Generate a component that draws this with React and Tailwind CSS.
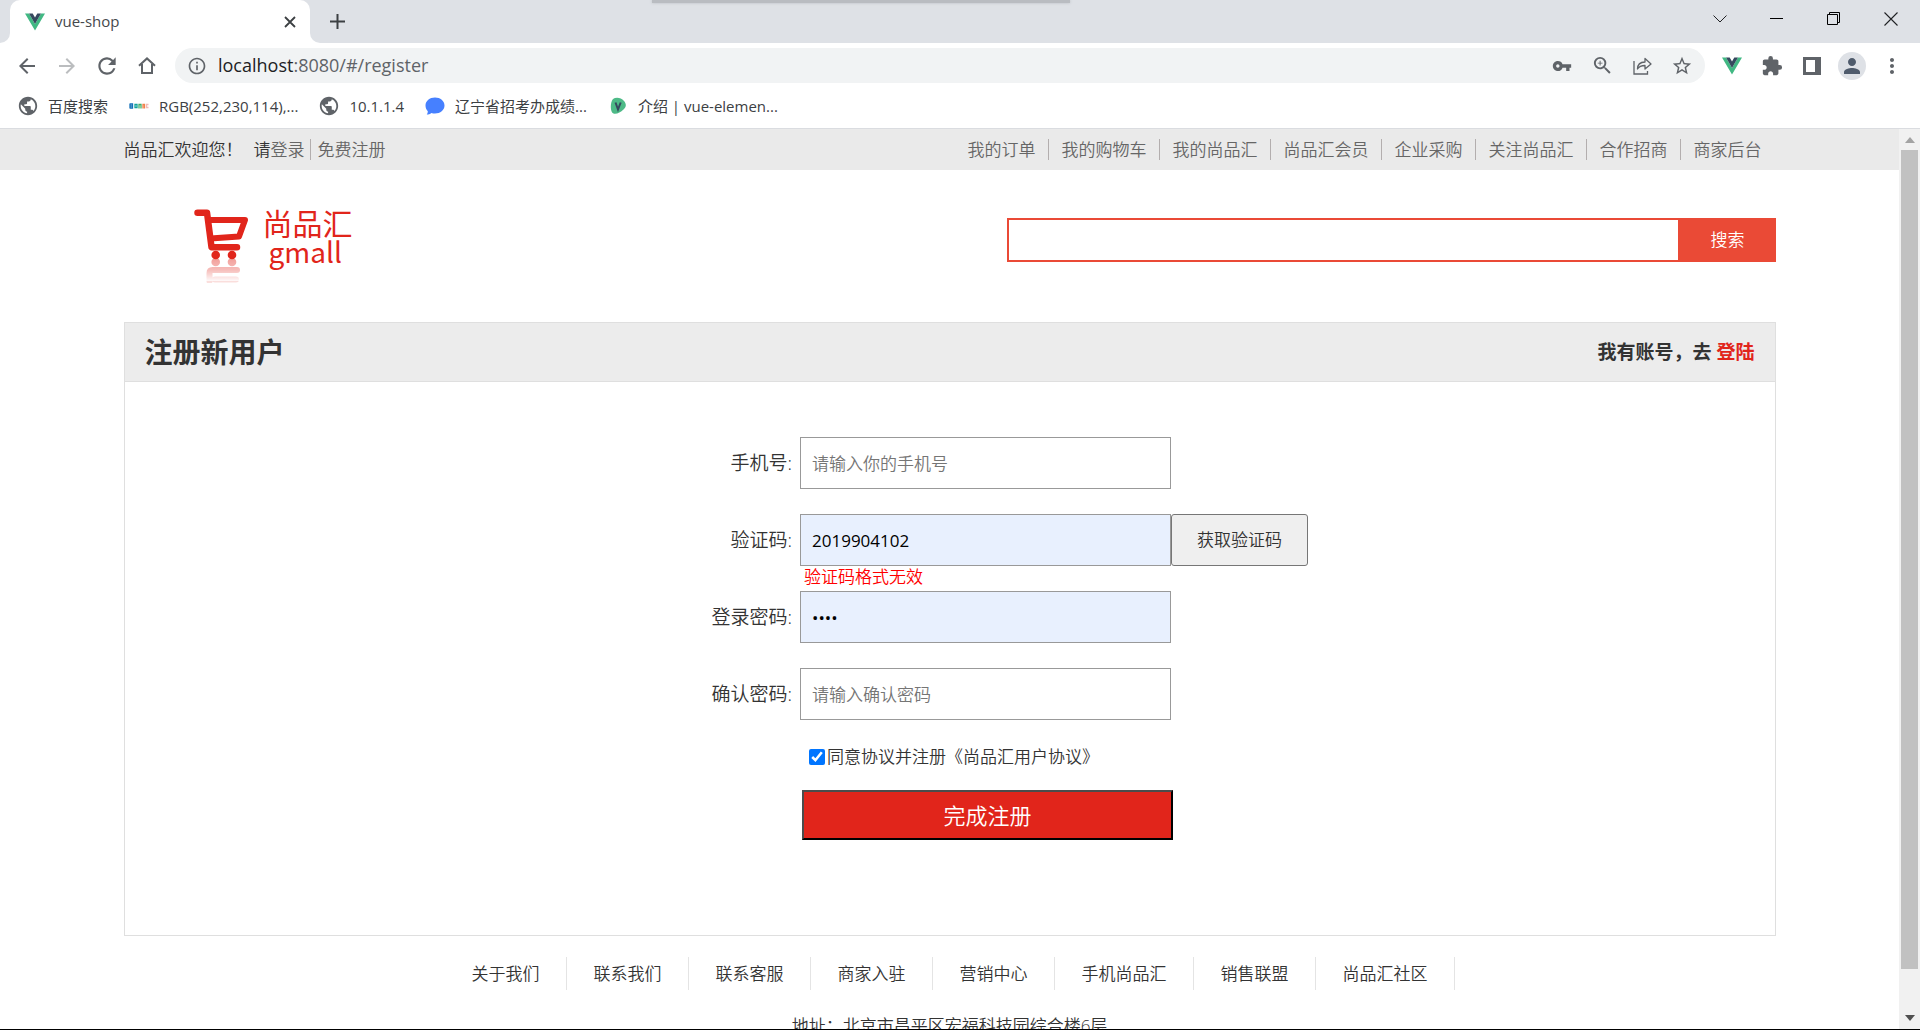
import { useState } from "react";
import {
  MdArrowBack,
  MdArrowForward,
  MdExtension,
  MdInfoOutline,
  MdMoreVert,
  MdPerson,
  MdPublic,
  MdRefresh,
  MdStarBorder,
  MdVpnKey,
  MdZoomIn,
} from "react-icons/md";

const topLinks = [
  "我的订单",
  "我的购物车",
  "我的尚品汇",
  "尚品汇会员",
  "企业采购",
  "关注尚品汇",
  "合作招商",
  "商家后台",
];

const footerLinks = [
  "关于我们",
  "联系我们",
  "联系客服",
  "商家入驻",
  "营销中心",
  "手机尚品汇",
  "销售联盟",
  "尚品汇社区",
];

function VueLogo() {
  return (
    <svg viewBox="0 0 20 18" className="h-[18px] w-5 shrink-0" aria-hidden="true">
      <path d="M0 0.5h4L10 11 16 0.5h4L10 17.5z" fill="#41b883" />
      <path d="M4 0.5h3.7L10 4.6 12.3 0.5H16L10 11z" fill="#35495e" />
    </svg>
  );
}

function TabStrip() {
  return (
    <div className="relative flex h-[43px] items-stretch overflow-hidden bg-[#dee1e6] text-[#202124]">
      <div className="absolute left-[652px] top-0 h-[3px] w-[418px] bg-[#b9bcc1] shadow-[0_0_3px_#b9bcc1]" />
      <div className="flex w-[10px] items-end bg-white">
        <div className="h-full w-full rounded-br-[10px] bg-[#dee1e6]" />
      </div>
      <div className="flex w-[300px] bg-[#dee1e6]">
        <div className="flex w-full items-center rounded-t-[10px] bg-white pl-[15px] pr-2">
          <VueLogo />
          <span className="ml-[10px] flex-1 text-[15px] text-[#45484c]">vue-shop</span>
          <button type="button" aria-label="关闭标签页" className="flex size-6 items-center justify-center">
            <svg viewBox="0 0 12 12" className="size-3" stroke="#3c4043" strokeWidth="1.8">
              <path d="M1 1l10 10M11 1L1 11" />
            </svg>
          </button>
        </div>
      </div>
      <div className="flex w-[10px] items-end bg-white">
        <div className="h-full w-full rounded-bl-[10px] bg-[#dee1e6]" />
      </div>
      <button type="button" aria-label="新标签页" className="flex w-[34px] items-center justify-center">
        <svg viewBox="0 0 15 15" className="size-[15px]" stroke="#3c4043" strokeWidth="2">
          <path d="M7.500 0v15M0 7.500h15" />
        </svg>
      </button>
      <div className="ml-auto flex h-[37px]">
        <button type="button" aria-label="搜索标签页" className="flex w-14 items-center justify-center">
          <svg viewBox="0 0 14 8" className="h-2 w-[14px]" fill="none" stroke="#202124">
            <path d="M0.500 0.500L7 7l6.500-6.500" />
          </svg>
        </button>
        <button type="button" aria-label="最小化" className="flex w-[57px] items-center justify-center">
          <svg viewBox="0 0 13 1" className="h-px w-[13px]">
            <rect width="13" height="1" />
          </svg>
        </button>
        <button type="button" aria-label="还原" className="flex w-[57px] items-center justify-center">
          <svg viewBox="0 0 13 13" className="size-[13px]" fill="none" stroke="#000">
            <path d="M0.500 2.500h10v10h-10zM2.500 2.500v-2h10v10h-2" />
          </svg>
        </button>
        <button type="button" aria-label="关闭" className="flex w-[58px] items-center justify-center">
          <svg viewBox="0 0 14 14" className="size-[14px]" stroke="#202124" strokeWidth="1.100">
            <path d="M0.500 0.500l13 13M13.500 0.500l-13 13" />
          </svg>
        </button>
      </div>
    </div>
  );
}

function IconButton({ label, children }) {
  return (
    <button type="button" aria-label={label} className="flex h-9 w-10 shrink-0 items-center justify-center">
      {children}
    </button>
  );
}

function Toolbar() {
  return (
    <div className="flex h-[45px] items-center bg-white pl-[7px] pr-2 text-[#5f6368]">
      <IconButton label="后退">
        <MdArrowBack size={24} />
      </IconButton>
      <IconButton label="前进">
        <MdArrowForward size={24} className="text-[#bbbdbf]" />
      </IconButton>
      <IconButton label="重新加载">
        <MdRefresh size={26} />
      </IconButton>
      <IconButton label="主页">
        <svg viewBox="0 0 18 17" className="h-[17px] w-[18px]" fill="none" stroke="currentColor" strokeWidth="2">
          <path d="M1 8.700L9 1.400l8 7.300M4 7v9h10V7" />
        </svg>
      </IconButton>

      {/* Address bar */}
      <div className="ml-2 flex h-[35px] flex-1 items-center rounded-full bg-[#f1f3f4] pl-3 pr-[3px]">
        <MdInfoOutline size={20} />
        <div className="ml-[11px] flex-1 pb-[2px] text-lg leading-6">
          <span className="text-[#202124]">localhost</span>:8080/#/register
        </div>
        <IconButton label="密码">
          <MdVpnKey size={20} />
        </IconButton>
        <IconButton label="缩放">
          <MdZoomIn size={23} />
        </IconButton>
        <IconButton label="分享">
          <svg viewBox="0 0 19 18" className="h-[18px] w-[19px]" fill="none" stroke="currentColor" strokeWidth="1.300">
            <path d="M1 4v13h13.500v-3" />
            <path d="M4.500 12c0-5 3-6.800 7.500-7V1.500L18 7l-6 5V8.500c-3.500 0-5.800.7-7.500 3.500z" strokeLinejoin="round" />
          </svg>
        </IconButton>
        <IconButton label="收藏">
          <MdStarBorder size={22} />
        </IconButton>
      </div>

      <div className="ml-[7px] flex">
        <IconButton label="Vue">
          <VueLogo />
        </IconButton>
        <IconButton label="扩展程序">
          <MdExtension size={22} />
        </IconButton>
        <IconButton label="侧边栏">
          <svg viewBox="0 0 18 18" className="size-[18px]" fill="currentColor">
            <path d="M0 0h18v18H0zM3 3v12h9V3z" fillRule="evenodd" />
          </svg>
        </IconButton>
        <IconButton label="用户">
          <span className="flex size-7 items-center justify-center rounded-full bg-[#dee1e6] text-[#4f5b6c]">
            <MdPerson size={24} />
          </span>
        </IconButton>
        <IconButton label="菜单">
          <MdMoreVert size={24} />
        </IconButton>
      </div>
    </div>
  );
}

function Bookmark({ icon, children }) {
  return (
    <a href="#bookmark" className="flex items-center gap-[10px] whitespace-nowrap">
      <span className="flex w-5 justify-center text-[#5f6368]">{icon}</span>
      {children}
    </a>
  );
}

function Bookmarks() {
  return (
    <div className="flex h-[41px] items-center gap-[21px] border-b border-[#dadce0] bg-white pb-1 pl-[18px] text-[15px] leading-5 text-[#3c4043]">
      <Bookmark icon={<MdPublic size={22} className="shrink-0" />}>百度搜索</Bookmark>
      <Bookmark
        icon={
          <svg viewBox="0 0 20 6" className="h-[6px] w-5">
            <g fill="none" strokeWidth="1.300">
              <path d="M1 0.500v5M1 1h2.500v4H1M1 3h2.500" stroke="#1270b8" />
              <path d="M6 1.500h2v3H6z" stroke="#10a39b" />
              <path d="M10 5.500v-4h2v4" stroke="#3fae6a" />
              <path d="M14 5.500v-4h1.500v4" stroke="#f0824a" />
              <path d="M19.500 1.500h-2v3h2" stroke="#f2b9b4" />
            </g>
          </svg>
        }
      >
        RGB(252,230,114),...
      </Bookmark>
      <Bookmark icon={<MdPublic size={22} className="shrink-0" />}>10.1.1.4</Bookmark>
      <Bookmark
        icon={
          <svg viewBox="0 0 20 18" className="h-[18px] w-5" fill="#4680ff">
            <path d="M10 0.500c5.300 0 9.500 3.500 9.500 8s-4.200 8-9.500 8c-1.300 0-2.500-.2-3.600-.6-1.300 1-3 1.700-4.700 1.700.7-.9 1.100-2.200 1.100-3.400C1.400 12.800.5 10.800.5 8.500c0-4.500 4.200-8 9.500-8z" />
          </svg>
        }
      >
        辽宁省招考办成绩...
      </Bookmark>
      <Bookmark
        icon={
          <svg viewBox="0 0 18 18" className="size-[18px]">
            <path d="M4 2C7 0 12 .5 15 4c2.500 3 2.500 6-.5 8.500-3 2.800-7 5-10 4C1 15.500 1 5 4 2z" fill="#4dba87" />
            <path d="M6.500 5.500L9 12.500l2.700-7" fill="none" stroke="#35495e" strokeWidth="2" />
          </svg>
        }
      >
        介绍 | vue-elemen...
      </Bookmark>
    </div>
  );
}

function SiteTopBar() {
  return (
    <div className="bg-[#eaeaea]">
      <div className="mx-auto flex h-[41px] w-full max-w-[1652px] items-center justify-between pr-[2px] leading-[21px]">
        <div className="flex">
          <span>尚品汇欢迎您！</span>
          <span className="ml-[11px]">请</span>
          <a href="#login" className="border-r border-[#b3aeae] pr-[5px] text-[#666]">
            登录
          </a>
          <a href="#register" className="pl-[7px] text-[#666]">
            免费注册
          </a>
        </div>
        <nav className="flex text-[#666]">
          {topLinks.map((link) => (
            <a
              key={link}
              href="#nav"
              className="border-r border-[#b3aeae] pl-[13px] pr-3 last:border-r-0"
            >
              {link}
            </a>
          ))}
        </nav>
      </div>
    </div>
  );
}

function CartLogo() {
  return (
    <svg viewBox="0 0 56 76" className="h-[76px] w-14" fill="none" stroke="#e1251b" aria-hidden="true">
      <defs>
        <linearGradient id="fade" x1="0" y1="0" x2="0" y2="1">
          <stop offset="0" stopColor="#fff" stopOpacity="0.45" />
          <stop offset="0.5" stopColor="#fff" stopOpacity="0.300" />
          <stop offset="1" stopColor="#fff" stopOpacity="0" />
        </linearGradient>
        <mask id="reflection" maskUnits="userSpaceOnUse" x="0" y="50" width="56" height="26">
          <rect y="51" width="56" height="24" fill="url(#fade)" />
        </mask>
      </defs>
      <path d="M4.500 5.700H14l4.500 34.500H44" strokeWidth="6.500" strokeLinecap="round" strokeLinejoin="round" />
      <path d="M18 13h34l-6 16.500-25 1.800" strokeWidth="6" strokeLinecap="round" strokeLinejoin="round" />
      <circle cx="22.700" cy="48" r="4.300" fill="#e1251b" stroke="none" />
      <circle cx="39" cy="48" r="4.300" fill="#e1251b" stroke="none" />
      <g mask="url(#reflection)">
        <circle cx="22.700" cy="55" r="4.300" fill="#e1251b" stroke="none" />
        <circle cx="39" cy="55" r="4.300" fill="#e1251b" stroke="none" />
        <path d="M44 63H19.500q-3 0-3 3v8M43 72.500H22" strokeWidth="6" strokeLinecap="round" />
      </g>
    </svg>
  );
}

function SiteHeader() {
  return (
    <div className="mx-auto flex w-full max-w-[1652px] items-start justify-between pb-[39px] pt-[37px]">
      <a href="#home" className="flex pl-[69px] text-[#e1251b]">
        <CartLogo />
        <span className="ml-[14px] flex flex-col font-['Noto_Sans_CJK_SC',sans-serif] font-normal">
          <span className="text-[30px] leading-[30px]">尚品汇</span>
          <span className="pl-[6px] text-[28px] leading-7">gmall</span>
        </span>
      </a>
      <form className="mt-[11px] flex h-11 w-[769px]" onSubmit={(e) => e.preventDefault()}>
        <input
          type="text"
          aria-label="搜索"
          className="min-w-0 flex-1 border-2 border-[#ea4a36] px-2 outline-none"
        />
        <button type="submit" className="w-24 bg-[#ea4a36] text-white">
          搜索
        </button>
      </form>
    </div>
  );
}

function Field({ id, label, type = "text", placeholder, filled, value, error, children }) {
  return (
    <div>
      <div className="flex h-[52px] items-center">
        <label htmlFor={id} className="mr-2 w-[90px] whitespace-nowrap text-right text-[19px]">
          {label}:
        </label>
        <input
          id={id}
          type={type}
          placeholder={placeholder}
          defaultValue={value}
          className={`h-full w-[371px] border border-[#999] px-[11px] text-black outline-none placeholder:text-[#757575] ${
            filled ? "bg-[#e8f0fe] font-normal" : "bg-white"
          }`}
        />
        {children}
      </div>
      <p className="h-[25px] pl-[102px] leading-[22px] text-[#f00]">{error}</p>
    </div>
  );
}

function RegisterForm() {
  const [agree, setAgree] = useState(true);

  return (
    <div className="mx-auto w-full max-w-[1652px] border border-[#dfdfdf]">
      <div className="flex h-[59px] items-center justify-between border-b border-[#dfdfdf] bg-[#ececec] px-5 font-bold">
        <h3 className="text-[28px]">注册新用户</h3>
        <span className="text-[19px]">
          我有账号，去{" "}
          <a href="#login" className="text-[#e1251b]">
            登陆
          </a>
        </span>
      </div>

      <form className="pb-[95px] pl-[35%] pt-[55px]" onSubmit={(e) => e.preventDefault()}>
        <Field id="phone" label="手机号" placeholder="请输入你的手机号" />
        <Field id="code" label="验证码" value="2019904102" filled error="验证码格式无效">
          <button
            type="button"
            className="h-full w-[137px] rounded-[3px] border border-[#767676] bg-[#efefef]"
          >
            获取验证码
          </button>
        </Field>
        <Field id="password" label="登录密码" type="password" value="1111" filled />
        <Field id="confirm" label="确认密码" type="password" placeholder="请输入确认密码" />

        <div className="flex h-6 items-center pl-[107px]">
          <input
            id="agree"
            type="checkbox"
            checked={agree}
            onChange={(e) => setAgree(e.target.checked)}
            className="size-4 accent-[#0075ff]"
          />
          <label htmlFor="agree" className="pl-[2px]">
            同意协议并注册《尚品汇用户协议》
          </label>
        </div>

        <button
          type="submit"
          className="ml-[100px] mt-[21px] block h-[50px] w-[371px] border-2 border-b-black border-l-[#4c4c4c] border-r-black border-t-[#4c4c4c] bg-[#e1251b] text-[22px] leading-7 text-white"
        >
          完成注册
        </button>
      </form>
    </div>
  );
}

function SiteFooter() {
  return (
    <div className="pt-[21px] text-center">
      <ul className="flex justify-center">
        {footerLinks.map((link) => (
          <li key={link} className="h-[33px] border-r border-[#e4e4e4] pl-[27px] pr-[26px] leading-[33px]">
            {link}
          </li>
        ))}
      </ul>
      <p className="mt-6 leading-6">地址：北京市昌平区宏福科技园综合楼6层</p>
    </div>
  );
}

function ScrollBar() {
  return (
    <div className="flex w-[21px] flex-col items-center bg-[#f1f1f1]">
      <div className="flex h-[21px] items-center">
        <svg viewBox="0 0 10 6" className="h-[6px] w-[10px]" fill="#a3a3a3">
          <path d="M5 0l5 6H0z" />
        </svg>
      </div>
      <div className="w-[17px] flex-1 bg-[#c1c1c1]" />
      <div className="flex h-[60px] items-end pb-2">
        <svg viewBox="0 0 10 6" className="h-[6px] w-[10px]" fill="#505050">
          <path d="M0 0h10L5 6z" />
        </svg>
      </div>
    </div>
  );
}

export default function App() {
  return (
    <div className="flex h-screen flex-col overflow-hidden border-b border-black bg-white font-['Open_Sans','Noto_Sans_CJK_SC',sans-serif]">
      <TabStrip />
      <Toolbar />
      <Bookmarks />
      <div className="flex min-h-0 flex-1">
        <main className="min-w-0 flex-1 overflow-hidden text-[17px] font-[350] text-[#333]">
          <SiteTopBar />
          <SiteHeader />
          <RegisterForm />
          <SiteFooter />
        </main>
        <ScrollBar />
      </div>
    </div>
  );
}
